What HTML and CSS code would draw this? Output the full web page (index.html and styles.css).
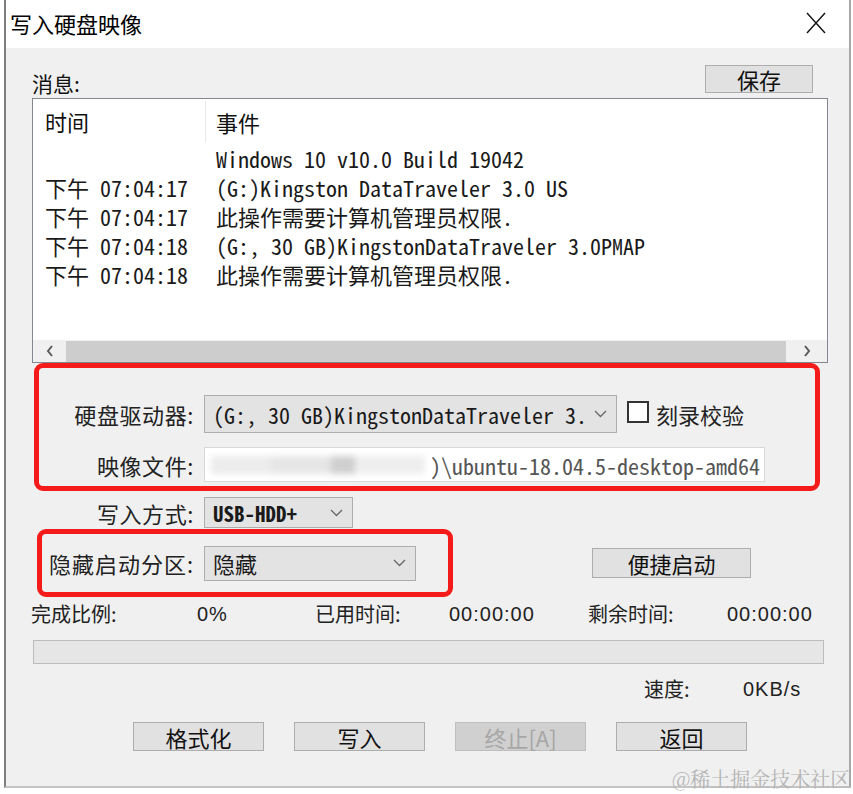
FILE: index.html
```html
<!DOCTYPE html>
<html lang="zh-CN">
<head>
    <meta charset="UTF-8">
    <meta name="viewport" content="width=device-width, initial-scale=1.0">
    <title>写入硬盘映像</title>
    <link rel="stylesheet" href="styles.css">
</head>
<body>

  <div class="window">
    <!-- Title bar -->
    <div class="titlebar">
      <span class="title">写入硬盘映像</span>
      <svg class="close" width="20" height="22" viewBox="0 0 20 22">
        <path d="M1 1L19 21M19 1L1 21" stroke="#111" stroke-width="1.4" fill="none"/>
      </svg>
    </div>

    <div class="client">
      <div class="msg-head">
        <span class="msg-label">消息:</span>
        <button class="btn btn-save">保存</button>
      </div>

      <!-- Message list -->
      <div class="log">
        <div class="log-head">
          <span class="col-time">时间</span>
          <span class="col-event">事件</span>
        </div>
        <div class="log-rows">
          <div class="log-row"><span class="t"></span><span class="e">Windows 10 v10.0 Build 19042</span></div>
          <div class="log-row"><span class="t">下午 07:04:17</span><span class="e">(G:)Kingston DataTraveler 3.0 US</span></div>
          <div class="log-row"><span class="t">下午 07:04:17</span><span class="e">此操作需要计算机管理员权限.</span></div>
          <div class="log-row"><span class="t">下午 07:04:18</span><span class="e">(G:, 30 GB)KingstonDataTraveler 3.0PMAP</span></div>
          <div class="log-row"><span class="t">下午 07:04:18</span><span class="e">此操作需要计算机管理员权限.</span></div>
        </div>
        <div class="hscroll">
          <span class="arrow arrow-left">
            <svg width="8" height="12" viewBox="0 0 8 12"><path d="M6 1L2 6L6 11" stroke="#5a5a5a" stroke-width="2" fill="none"/></svg>
          </span>
          <div class="thumb"></div>
          <span class="arrow arrow-right">
            <svg width="8" height="12" viewBox="0 0 8 12"><path d="M2 1L6 6L2 11" stroke="#5a5a5a" stroke-width="2" fill="none"/></svg>
          </span>
        </div>
      </div>

      <!-- Drive and image file -->
      <div class="mark mark-drive">
        <div class="field">
          <label>硬盘驱动器:</label>
          <div class="select sel-drive">
            <span>(G:, 30 GB)KingstonDataTraveler 3.</span>
            <svg class="chev" width="13" height="8" viewBox="0 0 13 8"><path d="M1 1L6.5 6.5L12 1" stroke="#666" stroke-width="1.3" fill="none"/></svg>
          </div>
          <span class="check"><span class="box"></span>刻录校验</span>
        </div>
        <div class="field field-file">
          <label>映像文件:</label>
          <div class="input-file">
            <div class="smudge">
              <span class="s1"></span><span class="s2"></span><span class="s3"></span><span class="s4"></span>
            </div>
            <span class="path">)\ubuntu-18.04.5-desktop-amd64</span>
          </div>
        </div>
      </div>

      <div class="field field-mode">
        <label>写入方式:</label>
        <div class="select sel-mode">
          <span>USB-HDD+</span>
          <svg class="chev" width="13" height="8" viewBox="0 0 13 8"><path d="M1 1L6.5 6.5L12 1" stroke="#666" stroke-width="1.3" fill="none"/></svg>
        </div>
      </div>

      <div class="row-hide">
        <div class="mark mark-hide">
          <div class="field">
            <label>隐藏启动分区:</label>
            <div class="select sel-hide">
              <span>隐藏</span>
              <svg class="chev" width="13" height="8" viewBox="0 0 13 8"><path d="M1 1L6.5 6.5L12 1" stroke="#666" stroke-width="1.3" fill="none"/></svg>
            </div>
          </div>
        </div>
        <button class="btn btn-quick">便捷启动</button>
      </div>

      <!-- Progress -->
      <div class="stats">
        <span class="st st-1">完成比例:</span>
        <span class="st st-2 num">0%</span>
        <span class="st st-3">已用时间:</span>
        <span class="st st-4 num">00:00:00</span>
        <span class="st st-5">剩余时间:</span>
        <span class="st num">00:00:00</span>
      </div>
      <div class="progress"></div>
      <div class="speed">
        <span class="sp-label">速度:</span>
        <span class="num">0KB/s</span>
      </div>

      <div class="actions">
        <button class="btn btn-act">格式化</button>
        <button class="btn btn-act">写入</button>
        <button class="btn btn-act" disabled>终止[A]</button>
        <button class="btn btn-act">返回</button>
      </div>
    </div>
  </div>

  <div class="watermark">@稀土掘金技术社区</div>

</body>
</html>
```

FILE: styles.css
```css
body {
    margin: 0;
    background-color: #fff;
    font-family: "Noto Sans CJK SC", "Noto Sans", sans-serif;
    color: #111;
}
.window {
    margin-left: 4px;
    width: 843px;
    height: 786px;
    border-left: 2px solid #7d7d7d;
    border-right: 2px solid #a8a8a8;
    border-bottom: 2px solid #c4c4c4;
    display: flex;
    flex-direction: column;
}
.titlebar {
    height: 48px;
    background-color: #fff;
    display: flex;
    align-items: center;
    justify-content: space-between;
    padding: 0 23px 2px 4px;
    box-sizing: border-box;
}
.title {
    font-size: 22px;
    line-height: 1;
    color: #000;
}
.client {
    flex: 1;
    background-color: #f0f0f0;
}
.btn {
    box-sizing: border-box;
    border: 1px solid #adadad;
    background-color: #e1e1e1;
    font-family: "Noto Sans CJK SC", sans-serif;
    font-size: 22px;
    line-height: 1;
    color: #111;
    padding: 0;
}
.btn:disabled {
    color: #a6a6a6;
    background-color: #d0d0d0;
    border-color: #bfbfbf;
}
.msg-head {
    display: flex;
    justify-content: space-between;
    align-items: flex-end;
    margin: 17px 36px 0 26px;
    height: 28px;
}
.msg-label {
    font-size: 21px;
    line-height: 1;
    margin-bottom: -1px;
}
.btn-save {
    width: 108px;
    height: 28px;
}
.log {
    margin: 5px 21px 0 26px;
    height: 265px;
    box-sizing: border-box;
    border: 1px solid #828790;
    background-color: #fff;
    display: flex;
    flex-direction: column;
}
.log-head {
    height: 45px;
    display: flex;
    align-items: center;
    font-size: 22px;
}
.col-time {
    width: 160px;
    padding-left: 12px;
    height: 41px;
    line-height: 41px;
    border-right: 1px solid #e8e8e8;
}
.col-event {
    padding-left: 10px;
}
.log-rows {
    flex: 1;
    font-family: "Noto Sans Mono CJK SC", "Liberation Mono", "Noto Sans CJK SC", monospace;
    font-size: 22px;
    line-height: 29px;
    color: #1a1a1a;
}
.log-row {
    display: flex;
    white-space: pre;
}
.log-row .t {
    width: 171px;
    padding-left: 12px;
}
.hscroll {
    height: 22px;
    display: flex;
    align-items: center;
    background-color: #f0f0f0;
}
.arrow {
    display: flex;
    align-items: center;
    justify-content: center;
    height: 22px;
}
.arrow-left {
    width: 33px;
}
.arrow-right {
    width: 41px;
}
.thumb {
    flex: 1;
    height: 21px;
    background-color: #cdcdcd;
}
.mark {
    border: 5px solid #f51b1b;
    border-radius: 9px;
    box-sizing: border-box;
}
.mark-drive {
    margin-left: 28px;
    width: 786px;
    height: 128px;
    padding-top: 27px;
}
.field {
    display: flex;
    align-items: center;
}
.field label {
    width: 155px;
    margin-right: 10px;
    text-align: right;
    font-size: 22px;
    letter-spacing: 0.6px;
    line-height: 1;
    color: #222;
}
.select {
    box-sizing: border-box;
    border: 1px solid #adadad;
    background-color: #e3e3e3;
    display: flex;
    align-items: center;
    justify-content: space-between;
    padding: 0 9px 0 8px;
    font-family: "Noto Sans Mono CJK SC", "Liberation Mono", "Noto Sans CJK SC", monospace;
    font-size: 22px;
    white-space: pre;
    color: #1a1a1a;
}
.sel-drive {
    width: 413px;
    height: 38px;
}
.check {
    margin-left: 10px;
    display: flex;
    align-items: center;
    font-size: 22px;
    color: #222;
}
.check .box {
    width: 18px;
    height: 18px;
    border: 2px solid #333;
    background-color: #fff;
    margin-right: 7px;
    margin-top: -5px;
}
.field-file {
    margin-top: 14px;
}
.input-file {
    box-sizing: border-box;
    width: 561px;
    height: 35px;
    border: 1px solid #d9d9d9;
    background-color: #fff;
    display: flex;
    align-items: center;
    justify-content: space-between;
    padding: 0 4px 0 6px;
    overflow: hidden;
}
.smudge {
    display: flex;
    align-items: center;
    filter: blur(3px);
}
.smudge span {
    display: block;
    height: 18px;
    background-color: #e4e4e4;
}
.smudge .s1 { width: 60px; background-color: #ececec; }
.smudge .s2 { width: 60px; background-color: #e6e6e6; }
.smudge .s3 { width: 24px; background-color: #cfcfcf; }
.smudge .s4 { width: 70px; background-color: #eeeeee; }
.path {
    font-family: "Noto Sans Mono CJK SC", "Liberation Mono", monospace;
    font-size: 22px;
    white-space: pre;
    color: #555;
}
.field-mode {
    margin: 6px 0 0 33px;
}
.sel-mode {
    width: 149px;
    height: 31px;
    font-weight: bold;
    font-size: 21px;
}
.row-hide {
    display: flex;
    align-items: center;
    margin-top: 1px;
}
.mark-hide {
    margin-left: 31px;
    width: 416px;
    height: 68px;
    display: flex;
    align-items: center;
}
.mark-hide label {
    width: 152px;
    letter-spacing: 1px;
}
.sel-hide {
    width: 212px;
    height: 35px;
    font-family: "Noto Sans CJK SC", sans-serif;
}
.btn-quick {
    margin-left: 139px;
    width: 159px;
    height: 30px;
}
.stats {
    margin-top: 6px;
    height: 22px;
    display: flex;
    font-size: 20px;
    line-height: 22px;
    color: #222;
}
.num {
    font-family: "Liberation Sans", Arial, sans-serif;
    letter-spacing: 1px;
}
.st-1 { margin-left: 25px; width: 166px; }
.st-2 { width: 118px; }
.st-3 { width: 134px; }
.st-4 { width: 139px; }
.st-5 { width: 139px; }
.progress {
    margin: 15px 0 0 27px;
    width: 791px;
    height: 24px;
    box-sizing: border-box;
    border: 1px solid #bcbcbc;
    background-color: #e6e6e6;
}
.speed {
    margin-top: 14px;
    height: 22px;
    display: flex;
    font-size: 20px;
    line-height: 22px;
    color: #222;
}
.sp-label {
    margin-left: 638px;
    width: 99px;
}
.actions {
    margin-top: 22px;
    display: flex;
    gap: 30px;
    padding-left: 127px;
}
.btn-act {
    width: 131px;
    height: 29px;
}
.watermark {
    position: absolute;
    left: 672px;
    top: 764px;
    font-family: "Noto Serif CJK SC", "Noto Sans CJK SC", serif;
    font-size: 20px;
    color: #b4b4b4;
}
```
